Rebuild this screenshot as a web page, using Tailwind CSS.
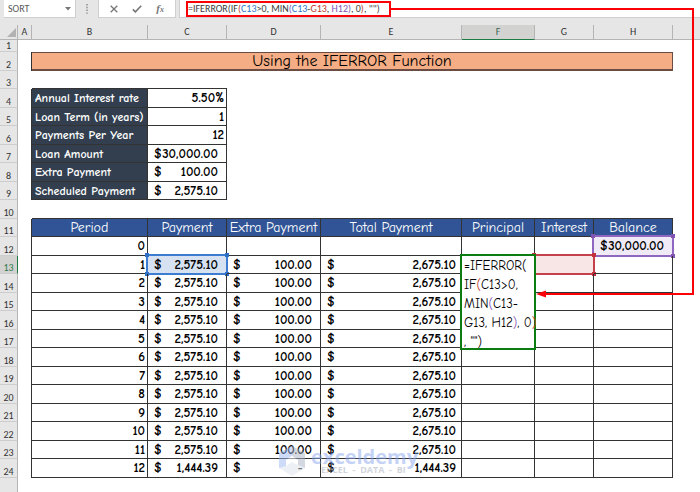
<!DOCTYPE html>
<html lang="en">
<head>
  <meta charset="UTF-8" />
  <meta name="viewport" content="width=device-width, initial-scale=1.0"/>
  <title>Using the IFERROR Function</title>
  <script src="https://cdn.jsdelivr.net/npm/@tailwindcss/browser@4"></script>
</head>
<body class="bg-[#e6e6e6] min-h-screen overflow-hidden font-['Carlito','Lato',sans-serif] text-[#404040]">
  <div class="relative min-h-screen flex flex-col">

    <!-- Formula Bar -->
    <header class="flex h-[18px] mb-[7px] pl-1 text-[10px]">
      <div class="flex items-center w-[72px] bg-white border-b border-r border-[#cfcfcf]">
        <input type="text" value="SORT" aria-label="Name box" class="w-14 pl-1 text-[10px] text-[#595959] outline-none">
        <button aria-label="Open name list" class="w-4 flex justify-center">
          <svg class="w-[6px] h-1" viewBox="0 0 6 4"><path d="M0 0h6L3 3.6z" fill="#777"/></svg>
        </button>
      </div>
      <div class="w-[22px] flex items-center justify-center">
        <svg class="w-[2px] h-[10px]" viewBox="0 0 2 10"><path d="M0 0h2v1.4H0zM0 2.8h2v1.4H0zM0 5.6h2V7H0zM0 8.4h2v1.4H0z" fill="#a6a6a6"/></svg>
      </div>
      <div class="w-[78px] flex items-center justify-around px-1 bg-white border-b border-x border-[#cfcfcf]">
        <button aria-label="Cancel">
          <svg class="w-2 h-2" viewBox="0 0 8 8"><path d="M.7.7l6.6 6.6M7.3.7L.7 7.3" stroke="#777" stroke-width="1.3" fill="none"/></svg>
        </button>
        <button aria-label="Enter">
          <svg class="w-[10px] h-2" viewBox="0 0 10 8"><path d="M.8 4.4l2.6 2.5L9.2.8" stroke="#777" stroke-width="1.6" fill="none"/></svg>
        </button>
        <button aria-label="Insert function" class="font-['Liberation_Serif',serif] italic font-bold text-[11px] leading-none text-[#777]">f<span class="text-[8px]">x</span></button>
      </div>
      <div class="flex-1 ml-[3px] pl-[6px] pt-[1px] bg-white border-b border-l border-[#cfcfcf] flex items-start">
        <div contenteditable="true" role="textbox" aria-label="Formula bar" class="h-4 w-[205px] border-2 border-[#fb0007] leading-3 whitespace-nowrap outline-none">=IFERROR(IF<span class="text-[#c0392b]">(</span><span class="text-[#2f75c8]">C13</span>&gt;0, MIN<span class="text-[#8255b5]">(</span><span class="text-[#2f75c8]">C13</span>-<span class="text-[#c0392b]">G13</span>, <span class="text-[#8255b5]">H12)</span>, 0<span class="text-[#c0392b]">)</span>, "")</div>
      </div>
    </header>

    <!-- Sheet -->
    <table class="w-full table-fixed border-separate border-spacing-0 bg-white">
      <colgroup>
        <col class="w-[18px]"><col class="w-[14px]"><col class="w-[116px]"><col class="w-[79px]"><col class="w-[94px]">
        <col class="w-[141px]"><col class="w-[73px]"><col class="w-[59px]"><col class="w-[79px]"><col>
      </colgroup>
      <thead class="bg-[#e6e6e6] text-[10px] leading-3 text-[#333]">
        <tr class="h-[15px]">
          <th class="p-0 border-b border-r border-[#b4b4b4]"><svg class="w-[9px] h-[9px] ml-[7px]" viewBox="0 0 9 9"><path d="M9 0v9H0z" fill="#b2b2b2"/></svg></th>
          <th class="p-0 border-b border-r border-[#b4b4b4] font-normal">A</th>
          <th class="p-0 border-b border-r border-[#b4b4b4] font-normal">B</th>
          <th class="p-0 border-b border-r border-[#b4b4b4] font-normal">C</th>
          <th class="p-0 border-b border-r border-[#b4b4b4] font-normal">D</th>
          <th class="p-0 border-b border-r border-[#b4b4b4] font-normal">E</th>
          <th class="p-0 border-b border-r border-b-[#1e7b45] border-r-[#b4b4b4] bg-[#d2d2d0] text-[#3f6650] font-normal">F</th>
          <th class="p-0 border-b border-r border-[#b4b4b4] font-normal">G</th>
          <th class="p-0 border-b border-r border-[#b4b4b4] font-normal">H</th>
          <th class="p-0 border-b border-[#b4b4b4]"></th>
        </tr>
      </thead>
      <tbody id="sheet" class="font-['Comic_Sans_MS','Comic_Neue','Open_Sans',sans-serif] font-semibold text-[13px] leading-4 text-black"></tbody>
    </table>
    <div class="flex-1 flex bg-white"><div class="w-[18px] bg-[#e6e6e6] border-r border-[#b4b4b4]"></div></div>

    <!-- Arrow from the formula bar to F13 -->
    <svg class="absolute left-[390px] top-0 w-[310px] h-[310px] pointer-events-none" viewBox="0 0 310 310">
      <path d="M0 9H303V294H152" fill="none" stroke="#fb0007" stroke-width="2"/>
      <path d="M146 294l10-3.5v7z" fill="#fb0007"/>
    </svg>

    <!-- Watermark -->
    <div class="absolute left-[278px] top-[445px] flex items-center gap-[5px] opacity-50 pointer-events-none">
      <svg class="w-7 h-8" viewBox="0 0 28 32">
        <path d="M14 1l13 7v15l-13 8-13-8V8z" fill="#dde5ec"/>
        <path d="M1 8l13-7v10l-6 4v6l-7 2z" fill="#9db8f3"/>
        <path d="M14 1l13 7v15l-7-3v-5l-6-4z" fill="#a9b3c4"/>
        <path d="M8 15l6-4 6 4v5l-6-3-6 4z" fill="#fff"/>
      </svg>
      <div>
        <div class="font-['Open_Sans',sans-serif] font-bold text-[20px] leading-[17px] text-[#8ba7ee]">exceldemy</div>
        <div class="font-['Open_Sans',sans-serif] font-bold text-[9px] leading-[9px] pl-[10px] text-[#a5adba] whitespace-pre">EXCEL  -  DATA  -  BI</div>
      </div>
    </div>
  </div>

  <script>
    const inputs = [
      ['Annual Interest rate', '5.50%'],
      ['Loan Term (in years)', '1'],
      ['Payments Per Year', '12'],
      ['Loan Amount', '30,000.00', true],
      ['Extra Payment', '100.00', true],
      ['Scheduled Payment', '2,575.10', true]
    ];
    const headings = ['Period', 'Payment', 'Extra Payment', 'Total Payment', 'Principal', 'Interest', 'Balance'];

    const cell = 'relative p-0 border-r border-b border-[#333] whitespace-nowrap';

    function rowHead(n) {
      const active = n === 13 ? 'bg-[#d2d2d0] text-[#2f7a4f] border-r-[#1e7b45]' : 'bg-[#e6e6e6] text-[#333] border-r-[#b4b4b4]';
      return `<th scope="row" class="p-0 border-r border-b border-b-[#cdcdcd] align-bottom font-['Carlito','Lato',sans-serif] font-normal text-[10px] leading-[11px] ${active}">${n}</th>`;
    }

    function money(value) {
      return `<div class="flex justify-between pl-[6px] pr-2"><span>$</span><span>${value}</span></div>`;
    }

    // coloured range box with four corner handles
    function rangeBox(box, dot) {
      return `<span class="absolute -top-[2px] -left-[2px] -right-[2px] -bottom-[2px] border-2 ${box}"></span>
        <span class="absolute -top-[3px] -left-[3px] w-1 h-1 ${dot}"></span>
        <span class="absolute -top-[3px] -right-[3px] w-1 h-1 ${dot}"></span>
        <span class="absolute -bottom-[3px] -left-[3px] w-1 h-1 ${dot}"></span>
        <span class="absolute -bottom-[3px] -right-[3px] w-1 h-1 ${dot}"></span>`;
    }

    const editor = `<div contenteditable="true" role="textbox" aria-label="Cell F13" class="absolute z-10 -top-[2px] -left-[2px] w-[76px] h-[96px] pl-[2px] border-2 border-[#0b7d10] bg-white font-medium leading-[19px] outline-none">=IFERROR(<br>IF<span class="text-[#c0392b]">(</span>C13&gt;0,<br>MIN<span class="text-[#8255b5]">(</span>C13-<br>G13, H12<span class="text-[#8255b5]">)</span>, 0<span class="text-[#c0392b]">)</span><br>, "")</div>`;

    function tableRow(n) {
      const period = n - 12;
      const first = n === 12;
      const last = n === 24;
      return `
        <td class="border-r border-[#333]"></td>
        <td class="${cell} pr-[2px] text-right">${period}</td>
        <td class="${cell} ${n === 13 ? 'bg-[#d6e2f1]' : ''}">${first ? '' : money(last ? '1,444.39' : '2,575.10')}${n === 13 ? rangeBox('border-[#3c7dd1]', 'bg-[#2f6fc6]') : ''}</td>
        <td class="${cell}">${first ? '' : money(last ? '-&nbsp;&nbsp;' : '100.00')}</td>
        <td class="${cell}">${first ? '' : `<div class="flex justify-between pl-[6px] pr-[5px]"><span>$</span><span>${last ? '1,444.39' : '2,675.10'}</span></div>`}</td>
        <td class="${cell}">${n === 13 ? editor : ''}</td>
        <td class="${cell} ${n === 13 ? 'bg-[#f8e6e6]' : ''}">${n === 13 ? rangeBox('border-[#c4404a]', 'bg-[#c4303c]') : ''}</td>
        <td class="${cell} ${first ? 'bg-[#efeaf6]' : ''}">${first ? money('30,000.00') + rangeBox('border-[#8f66c0]', 'bg-[#8255b5]') : ''}</td>
        <td></td>`;
    }

    let html = '';
    for (let n = 1; n <= 24; n++) {
      let cells = '<td colspan="9" class="p-0"></td>';
      if (n === 2) {
        cells = `<td class="border-r border-[#333]"></td>
          <td colspan="7" class="p-0 border-t border-b-2 border-r border-[#6b4c42] bg-[#f4ad84] text-center font-medium text-[16px] leading-[15px]">Using the IFERROR Function</td><td></td>`;
      } else if (n === 3 || n === 10) {
        cells = `<td></td><td colspan="${n === 3 ? 2 : 7}" class="border-b border-[#333]"></td><td colspan="${n === 3 ? 6 : 1}"></td>`;
      } else if (n >= 4 && n <= 9) {
        const [label, value, isMoney] = inputs[n - 4];
        cells = `<td class="border-r border-[#333]"></td>
          <td class="${cell} bg-[#333f4f] border-[#1b2230] pl-[3px] text-[12px] text-white">${label}</td>
          <td class="${cell} text-right">${isMoney ? money(value) : `<div class="pr-[2px]">${value}</div>`}</td><td colspan="6"></td>`;
      } else if (n === 11) {
        cells = `<td class="border-r border-[#333]"></td>` + headings.map(h =>
          `<th scope="col" class="${cell} bg-[#305496] text-white font-medium text-[14px] text-center">${h}</th>`).join('') + '<td></td>';
      } else if (n >= 12) {
        cells = tableRow(n);
      }
      html += `<tr class="${n === 1 ? 'h-3' : n % 2 ? 'h-[18px]' : 'h-[19px]'}">${rowHead(n)}${cells}</tr>`;
    }
    document.getElementById('sheet').innerHTML = html;
  </script>
</body>
</html>
